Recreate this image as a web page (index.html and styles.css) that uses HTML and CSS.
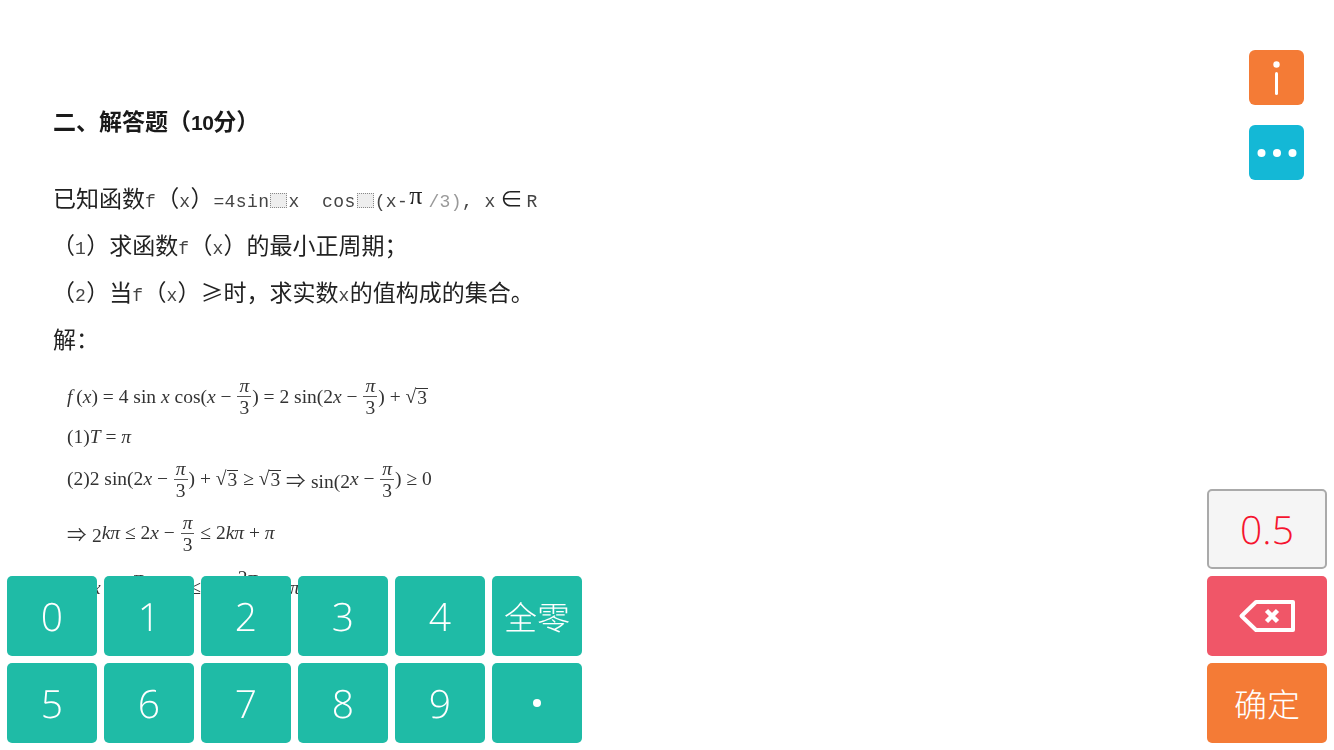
FILE: index.html
```html
<!DOCTYPE html>
<html lang="zh-CN">
<head>
<meta charset="utf-8">
<title>解答题</title>
<link rel="stylesheet" href="styles.css">
</head>
<body>
<main class="doc">
  <h1 class="doc-title">二、解答题（<span class="title-num">10</span>分）</h1>
  <p class="line first">已知函数<span class="mono">f</span><span class="par">（</span><span class="mono">x</span><span class="par">）</span><span class="mono">=4sin</span><i class="tofu"></i><span class="mono">x&nbsp;&nbsp;cos</span><i class="tofu"></i><span class="mono">(x-</span><span class="bigpi">π</span><span class="mono faint">/3)</span><span class="mono">,&nbsp;x</span><span class="elem">∈</span><span class="mono">R</span></p>
  <p class="line indent"><span class="par">（</span><span class="mono">1</span><span class="par">）</span>求函数<span class="mono">f</span><span class="par">（</span><span class="mono">x</span><span class="par">）</span>的最小正周期；</p>
  <p class="line indent"><span class="par">（</span><span class="mono">2</span><span class="par">）</span>当<span class="mono">f</span><span class="par">（</span><span class="mono">x</span><span class="par">）</span>≥时，求实数<span class="mono">x</span>的值构成的集合。</p>
  <p class="line">解：</p>
  <div class="math">
    <div class="row r1"><em>f</em>&thinsp;(<em>x</em>) = 4 sin <em>x</em> cos(<em>x</em> − <span class="frac"><span class="num"><em>π</em></span><span class="den">3</span></span>) = 2 sin(2<em>x</em> − <span class="frac"><span class="num"><em>π</em></span><span class="den">3</span></span>) + √<span class="over">3</span></div>
    <div class="row r2">(1)<em>T</em> = <em>π</em></div>
    <div class="row r3">(2)2 sin(2<em>x</em> − <span class="frac"><span class="num"><em>π</em></span><span class="den">3</span></span>) + √<span class="over">3</span> ≥ √<span class="over">3</span> ⇒ sin(2<em>x</em> − <span class="frac"><span class="num"><em>π</em></span><span class="den">3</span></span>) ≥ 0</div>
    <div class="row r4">⇒ 2<em>kπ</em> ≤ 2<em>x</em> − <span class="frac"><span class="num"><em>π</em></span><span class="den">3</span></span> ≤ 2<em>kπ</em> + <em>π</em></div>
    <div class="row r5">⇒ <em>x</em> ∈ <span class="frac"><span class="num"><em>π</em></span><span class="den">6</span></span> + <em>kπ</em> ≤ <em>x</em> ≤ <span class="frac"><span class="num">2<em>π</em></span><span class="den">3</span></span> + <em>kπ</em> ≡</div>
  </div>
</main>

<nav class="tools">
  <button class="tool tool-info" aria-label="信息">
    <svg width="55" height="55" viewBox="0 0 55 55"><circle cx="27.500" cy="14.500" r="3.200" fill="#fff"/><path d="M27.500 23.500v20" stroke="#fff" stroke-width="3" stroke-linecap="round"/></svg>
  </button>
  <button class="tool tool-more" aria-label="更多">
    <svg width="55" height="55" viewBox="0 0 55 55"><circle cx="12.500" cy="28" r="4" fill="#fff"/><circle cx="28" cy="28" r="4" fill="#fff"/><circle cx="43.500" cy="28" r="4" fill="#fff"/></svg>
  </button>
</nav>

<section class="keypad">
  <button class="key">0</button>
  <button class="key">1</button>
  <button class="key">2</button>
  <button class="key">3</button>
  <button class="key">4</button>
  <button class="key key-cjk">全零</button>
  <button class="key">5</button>
  <button class="key">6</button>
  <button class="key">7</button>
  <button class="key">8</button>
  <button class="key">9</button>
  <button class="key key-dot" aria-label="小数点"><span class="dot"></span></button>
</section>

<section class="score">
  <output class="score-value">0.5</output>
  <button class="key key-back" aria-label="退格">
    <svg width="58" height="34" viewBox="0 0 58 34"><path d="M18 3H55V31H18L3.500 17Z" fill="none" stroke="#fff" stroke-width="4" stroke-linejoin="round"/><path d="M28.500 11.500L39.500 22.500M39.500 11.500L28.500 22.500" stroke="#fff" stroke-width="4.500"/></svg>
  </button>
  <button class="key key-cjk key-ok">确定</button>
</section>
</body>
</html>
```
FILE: styles.css
```css
* { box-sizing: border-box; }
html, body { margin: 0; padding: 0; height: 100%; overflow: hidden; background: #fff; }
body { font-family: "Noto Sans CJK SC", "Liberation Sans", sans-serif; }

.doc { padding: 97px 0 0 53px; color: #222; filter: blur(0.45px); }
.doc-title { margin: 0 0 30px; font-size: 23px; font-weight: 700; line-height: 47px; height: 47px; color: #1a1a1a; }
.title-num { font-family: "Liberation Sans", sans-serif; font-size: 21px; letter-spacing: -0.500px; }
.line { margin: 0; height: 47px; line-height: 47px; font-size: 23px; white-space: nowrap; font-weight: 400; }
.indent { margin-left: -1px; }
.par { font-feature-settings: "fwid"; }
.mono { font-family: "Liberation Mono", monospace; font-size: 18px; letter-spacing: 0.400px; color: #444; }
.faint { color: #999; }
.tofu { display: inline-block; width: 17px; height: 15px; margin: 0 1px; border: 1px dotted #888; background: #eee; vertical-align: -1px; }
.bigpi { font-family: "Liberation Serif", serif; font-size: 26px; margin: 0 6px 0 1px; position: relative; top: -3px; }
.elem { font-family: "Liberation Serif", serif; font-size: 23px; margin: 0 4px; }

.math { margin: 8px 0 0 14px; font-family: "Liberation Serif", serif; font-size: 19.500px; color: #333; white-space: nowrap; }
.math em { font-style: italic; }
.row { display: flex; align-items: center; white-space: pre-wrap; }
.r1 { height: 53px; }
.r2 { height: 28px; }
.r3 { height: 56px; }
.r4 { height: 52px; }
.r5 { height: 58px; }
.frac { display: inline-flex; flex-direction: column; align-items: center; line-height: 19px; margin: 0 1px; }
.num { border-bottom: 1px solid #555; padding: 0 2px 1px; }
.den { padding-top: 1px; }
.over { border-top: 1px solid #333; line-height: 17px; padding: 0 1px; }

.tools { position: fixed; top: 50px; left: 1249px; display: flex; flex-direction: column; gap: 20px; }
button { border: 0; padding: 0; margin: 0; cursor: pointer; }
.tool { display: block; width: 55px; height: 55px; border-radius: 6px; line-height: 0; }
.tool-info { background: #f47b36; }
.tool-more { background: #14b8d6; }

.keypad { position: fixed; left: 7px; top: 576px; display: grid; grid-template-columns: repeat(6, 90px); grid-auto-rows: 80px; gap: 7px; }
.key { display: flex; align-items: center; justify-content: center; border-radius: 5px; background: #1fbba6; color: #fff; font-family: "Open Sans", "Liberation Sans", sans-serif; font-weight: 300; font-size: 39px; text-rendering: geometricPrecision; }
.key-cjk { font-family: "Noto Sans CJK SC", sans-serif; font-weight: 300; font-size: 33px; }
.dot { width: 8px; height: 8px; border-radius: 50%; background: #fff; }

.score { position: fixed; left: 1207px; top: 489px; width: 120px; display: flex; flex-direction: column; gap: 7px; }
.score .key { width: 120px; height: 80px; }
.score-value { display: flex; align-items: center; justify-content: center; height: 80px; background: #f5f5f5; border: 2px solid #aaa; border-radius: 5px; color: #f5142f; font-family: "Open Sans", "Liberation Sans", sans-serif; font-weight: 300; font-size: 39px; text-rendering: geometricPrecision; }
.score .key-back { background: #f05668; }
.score .key-ok { background: #f47b36; }
```
